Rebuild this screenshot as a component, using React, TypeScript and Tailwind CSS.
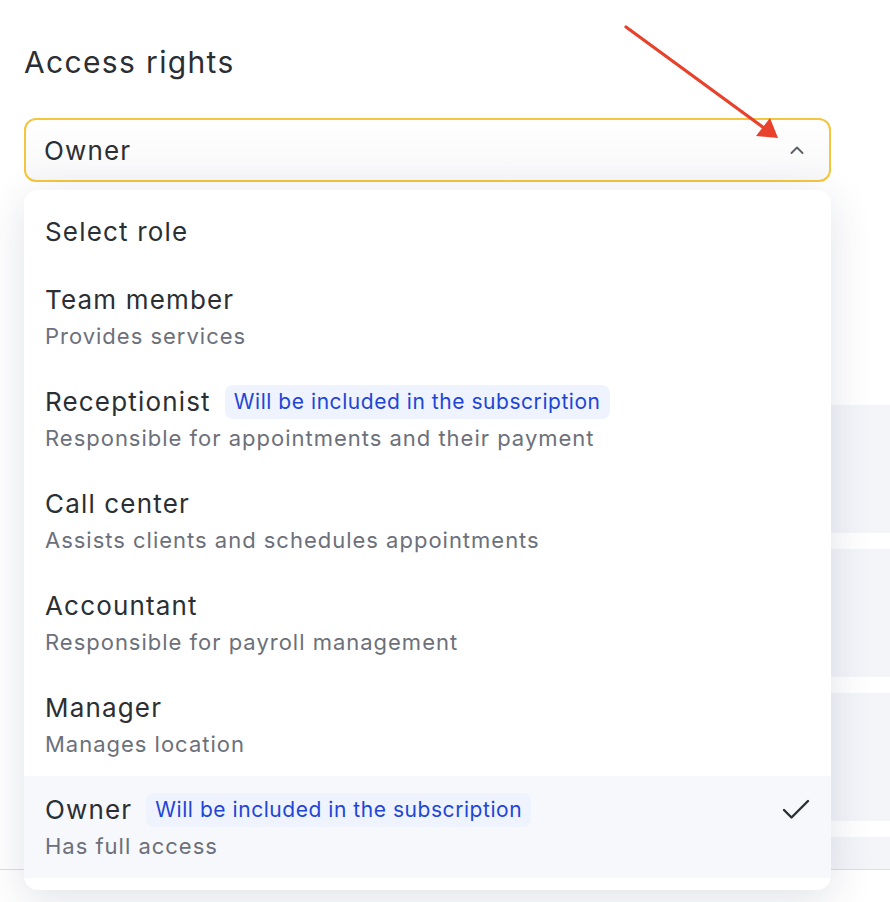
import { Check } from 'lucide-react'

type Role = { title: string; desc?: string; badge?: boolean; selected?: boolean }

const roles: Role[] = [
  { title: 'Select role' },
  { title: 'Team member', desc: 'Provides services' },
  { title: 'Receptionist', desc: 'Responsible for appointments and their payment', badge: true },
  { title: 'Call center', desc: 'Assists clients and schedules appointments' },
  { title: 'Accountant', desc: 'Responsible for payroll management' },
  { title: 'Manager', desc: 'Manages location' },
  { title: 'Owner', desc: 'Has full access', badge: true, selected: true },
]

function Badge() {
  return (
    <span className="ml-[14px] rounded-lg bg-[#eef3fd] px-[9px] text-[21px] leading-[34px] tracking-[0.026em] text-[#1f45d6]">
      Will be included in the subscription
    </span>
  )
}

function RoleRow({ role }: { role: Role }) {
  return (
    <div className={`flex items-start justify-between pl-[21px] pr-[23px] py-[17px] ${role.selected ? 'bg-[#f6f8fb]' : ''}`}>
      <div>
        <div className="flex items-center">
          <span className="text-[26px] leading-[34px] tracking-[0.045em] text-[#2b2f33]">{role.title}</span>
          {role.badge && <Badge />}
        </div>
        {role.desc && (
          <div className="mt-1 text-[22px] leading-[30px] tracking-[0.045em] text-[#6c707a]">{role.desc}</div>
        )}
      </div>
      {role.selected && (
        <Check className="-mr-[6px] -mt-[1px] h-9 w-9 text-[#2b2f33]" strokeWidth={1.6} absoluteStrokeWidth />
      )}
    </div>
  )
}

export default function App() {
  return (
    <div className="relative h-[902px] w-[890px] overflow-hidden bg-white font-['Inter',sans-serif]">
      <div className="pl-6 pt-[40px]">
        <h2 className="text-[30px] leading-[44px] tracking-[0.045em] text-[#2b2f33]">Access rights</h2>

        {/* Select */}
        <div className="relative mt-[34px] w-[807px]">
          <div className="flex h-16 items-center justify-between rounded-xl border-2 border-[#f4c63d] bg-gradient-to-b from-white to-[#f8f8fa] pl-[18px] pr-[25px]">
            <span className="text-[26px] tracking-[0.045em] text-[#2b2f33]">Owner</span>
            <svg width="14" height="8" viewBox="0 0 14 8" fill="none">
              <polyline points="1.5,7 7,1.5 12.5,7" stroke="#5b5e64" strokeWidth="1.8" strokeLinecap="round" strokeLinejoin="round" />
            </svg>
          </div>

          {/* Menu */}
          <div className="absolute left-0 top-[72px] z-10 w-full rounded-[14px] bg-white pb-3 pt-2 shadow-[0_10px_44px_rgba(40,50,90,0.14)]">
            {roles.map((r) => (
              <RoleRow key={r.title} role={r} />
            ))}
          </div>
        </div>

        {/* Background content */}
        <div className="mt-[223px] flex flex-col gap-4">
          <div className="h-32 rounded-l-lg bg-[#f4f5f9]" />
          <div className="h-32 rounded-l-lg bg-[#f4f5f9]" />
          <div className="h-32 rounded-l-lg bg-[#f4f5f9]" />
          <div className="h-8 rounded-l-lg bg-[#f4f5f9]" />
        </div>
      </div>
      <div className="h-px w-full bg-[#dcdde6]" />

      {/* Annotation arrow */}
      <svg className="pointer-events-none absolute left-0 top-0 z-20" width="890" height="902">
        <line x1="626" y1="27" x2="764" y2="128" stroke="#e8412c" strokeWidth="3.2" strokeLinecap="round" />
        <polygon points="778,138 756,136 770,118" fill="#e8412c" />
      </svg>
    </div>
  )
}
